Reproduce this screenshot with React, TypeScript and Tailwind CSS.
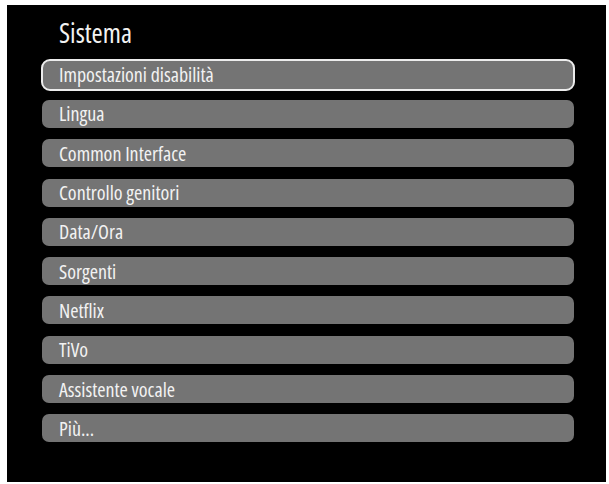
const items = [
  "Impostazioni disabilità",
  "Lingua",
  "Common Interface",
  "Controllo genitori",
  "Data/Ora",
  "Sorgenti",
  "Netflix",
  "TiVo",
  "Assistente vocale",
  "Più...",
];

// condensed humanist face, as on the TV menu
const font: React.CSSProperties = {
  fontFamily: '"Open Sans", "Roboto Condensed", "DejaVu Sans Condensed", sans-serif',
  fontStretch: "80%",
};

export default function App() {
  return (
    <div className="w-[609px] h-[484px] bg-white pt-[5px] pl-[7px]" style={font}>
      <div className="w-[599px] h-[477px] bg-black pt-[13px]">
        {/* Title */}
        <h1 className="pl-[52px] text-[27px] leading-[30px] font-medium text-[#f2f2f2]">Sistema</h1>

        {/* Menu list */}
        <div className="mt-[7px] flex flex-col">
          {items.map((label, i) => (
            <div key={label} className="h-[39.3px] flex items-center">
              {i === 0 ? (
                <div className="ml-[34px] w-[534px] h-[32px] rounded-[9px] border-2 border-[#ececec] bg-[#747474] flex items-center pl-[16px] pt-[1px]">
                  <span className="text-[20px] leading-none font-medium text-[#f2f2f2]">{label}</span>
                </div>
              ) : (
                <div className="ml-[35px] w-[532px] h-[28px] rounded-[7px] bg-[#747474] flex items-center pl-[17px] pt-[1px]">
                  <span className="text-[20px] leading-none font-medium text-[#f2f2f2]">{label}</span>
                </div>
              )}
            </div>
          ))}
        </div>
      </div>
    </div>
  );
}
